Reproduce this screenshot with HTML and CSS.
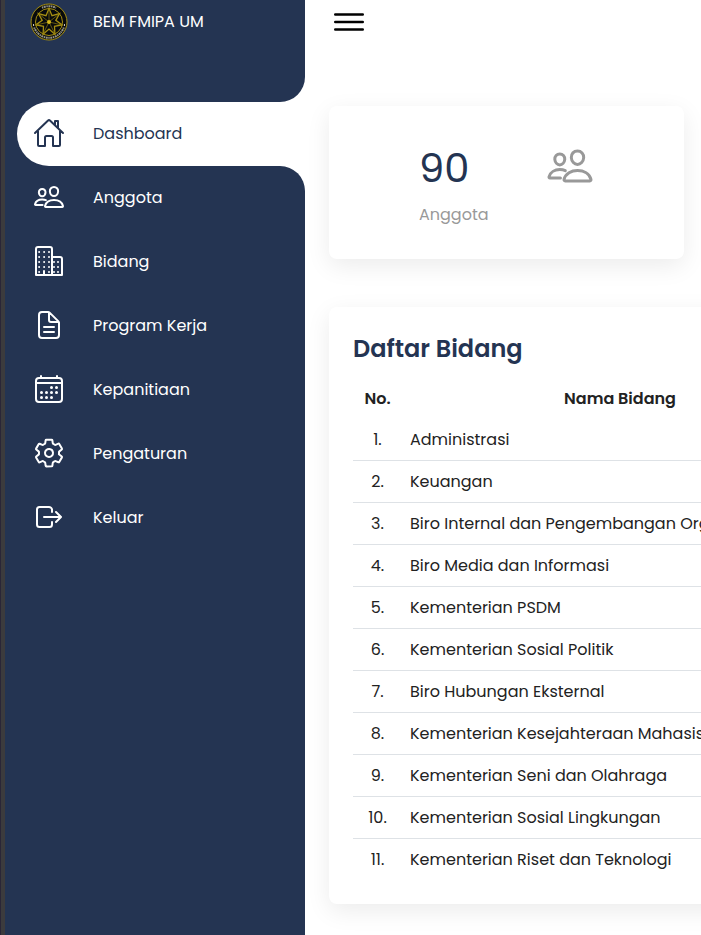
FILE: index.html
```html
<!DOCTYPE html>
<html lang="id">
<head>
<meta charset="utf-8">
<title>BEM FMIPA UM</title>
<link rel="stylesheet" href="styles.css">
</head>
<body>
<div class="edge"></div>
<nav class="sidebar">
  <a class="brand">
    <svg class="logo" viewBox="0 0 38 38">
      <circle cx="19" cy="19" r="18" fill="#080a0c" stroke="#a68f12" stroke-width="1"/>
      <path d="M12 4.8A15.8 15.8 0 0126 4.8M4.2 24.5A15.8 15.8 0 0033.8 24.5" fill="none" stroke="#b9b7a5" stroke-width="2" stroke-dasharray="1.4 .6 2 .6" opacity=".8"/>
      <circle cx="19" cy="19" r="13.5" fill="none" stroke="#a68f12" stroke-width="1"/>
      <path d="M19 5.5L22 12.7 29.6 10.6 25.8 17.4 32.2 22 24.5 23.4 24.9 31.2 19 26 13.1 31.2 13.5 23.4 5.8 22 12.2 17.4 8.4 10.6 16 12.7z" fill="none" stroke="#a68f12" stroke-width="1.3"/>
      <path d="M19 19V6M19 19l10-8M19 19l13 3M19 19l6 12M19 19l-6 12M19 19L6 22M19 19L9 11" fill="none" stroke="#8b790f" stroke-width=".7"/>
      <circle cx="19" cy="19" r="2" fill="#d6b91c"/>
      <path d="M3 22h1M34 22h1" stroke="#fff" stroke-width="1.3"/>
    </svg>
    <span>BEM FMIPA UM</span>
  </a>
  <div class="gap"></div>
  <a class="item active">
    <svg class="icon" viewBox="0 0 512 512"><path d="M80 212v236a16 16 0 0016 16h96V328a24 24 0 0124-24h80a24 24 0 0124 24v136h96a16 16 0 0016-16V212M480 256L266.89 52c-5-5.28-16.69-5.34-21.78 0L32 256M400 179V64h-48v69"/></svg>
    <span>Dashboard</span>
  </a>
  <div class="lower">
  <a class="item">
    <svg class="icon" viewBox="0 0 512 512"><use href="#people"/></svg>
    <span>Anggota</span>
  </a>
  <a class="item">
    <svg class="icon" viewBox="0 0 512 512"><path d="M176 416v64M80 32h192a32 32 0 0132 32v412a4 4 0 01-4 4H48V64a32 32 0 0132-32zM320 192h112a32 32 0 0132 32v256H304V208a16 16 0 0116-16z"/><path class="dots" d="M98 112h0M98 192h0M98 272h0M98 352h0M98 432h0M178 112h0M178 192h0M178 272h0M178 352h0M256 112h0M256 192h0M256 272h0M256 352h0M256 432h0M336 272h0M336 352h0M336 432h0M400 272h0M400 352h0M400 432h0"/></svg>
    <span>Bidang</span>
  </a>
  <a class="item">
    <svg class="icon" viewBox="0 0 512 512"><path d="M416 221.25V416a48 48 0 01-48 48H144a48 48 0 01-48-48V96a48 48 0 0148-48h98.75a32 32 0 0122.62 9.37l141.26 141.26a32 32 0 019.37 22.62zM256 56v120a32 32 0 0032 32h120M176 288h160M176 368h160"/></svg>
    <span>Program Kerja</span>
  </a>
  <a class="item">
    <svg class="icon" viewBox="0 0 512 512"><rect x="48" y="80" width="416" height="384" rx="48"/><path d="M128 48v32M384 48v32M464 160H48"/><path class="dots big" d="M296 232h0M376 232h0M136 312h0M216 312h0M296 312h0M376 312h0M136 392h0M216 392h0M296 392h0"/></svg>
    <span>Kepanitiaan</span>
  </a>
  <a class="item">
    <svg class="icon" viewBox="0 0 512 512"><path d="M262.29 192.31a64 64 0 1057.4 57.4 64.13 64.13 0 00-57.4-57.4zM416.39 256a154.34 154.34 0 01-1.53 20.79l45.21 35.46a10.81 10.81 0 012.45 13.75l-42.77 74a10.81 10.81 0 01-13.14 4.59l-44.9-18.08a16.11 16.11 0 00-15.17 1.75A164.48 164.48 0 01325 400.8a15.94 15.94 0 00-8.82 12.14l-6.73 47.89a11.08 11.08 0 01-10.68 9.17h-85.54a11.11 11.11 0 01-10.69-8.87l-6.72-47.82a16.07 16.07 0 00-9-12.22 155.3 155.3 0 01-21.46-12.57 16 16 0 00-15.11-1.71l-44.89 18.07a10.81 10.81 0 01-13.14-4.58l-42.77-74a10.8 10.8 0 012.45-13.75l38.21-30a16.05 16.05 0 006-14.08c-.36-4.17-.58-8.33-.58-12.5s.21-8.27.58-12.35a16 16 0 00-6.07-13.94l-38.19-30A10.81 10.81 0 0149.48 186l42.77-74a10.81 10.81 0 0113.14-4.59l44.9 18.08a16.11 16.11 0 0015.17-1.75A164.48 164.48 0 01187 111.2a15.94 15.94 0 008.82-12.14l6.73-47.89A11.08 11.08 0 01213.23 42h85.54a11.11 11.11 0 0110.69 8.87l6.72 47.82a16.07 16.07 0 009 12.22 155.3 155.3 0 0121.46 12.57 16 16 0 0015.11 1.71l44.89-18.07a10.81 10.81 0 0113.14 4.58l42.77 74a10.8 10.8 0 01-2.45 13.75l-38.21 30a16.05 16.05 0 00-6.05 14.08c.33 4.14.55 8.3.55 12.47z"/></svg>
    <span>Pengaturan</span>
  </a>
  <a class="item">
    <svg class="icon" viewBox="0 0 512 512"><path d="M304 336v40a40 40 0 01-40 40H104a40 40 0 01-40-40V136a40 40 0 0140-40h152c22.09 0 48 17.91 48 40v40M368 336l80-80-80-80M176 256h256"/></svg>
    <span>Keluar</span>
  </a>
  </div>
</nav>
<main class="main">
  <header class="topbar">
    <svg class="icon menu" viewBox="0 0 512 512"><path d="M80 160h352M80 256h352M80 352h352"/></svg>
  </header>
  <section class="card stat">
    <div>
      <div class="number">90</div>
      <div class="label">Anggota</div>
    </div>
    <svg class="icon people" viewBox="0 0 512 512"><g id="people"><path d="M402 168c-2.93 40.67-33.1 72-66 72s-63.12-31.32-66-72c-3-42.31 26.37-72 66-72s69 30.46 66 72zM336 304c-65.17 0-127.84 32.37-143.54 95.41-2.08 8.34 3.15 16.59 11.72 16.59h263.65c8.57 0 13.77-8.25 11.72-16.59C463.85 335.36 401.18 304 336 304zM200 185.94c-2.34 32.48-26.72 58.06-53 58.06s-50.7-25.57-53-58.06C91.61 152.15 115.34 128 147 128s55.39 24.77 53 57.94zM206 306c-18.05-8.27-37.93-11.45-59-11.45-52 0-102.1 25.85-114.65 76.2-1.65 6.66 2.53 13.25 9.37 13.25H154"/></g></svg>
  </section>
  <section class="card list">
    <h2>Daftar Bidang</h2>
    <table>
      <thead><tr><th class="no">No.</th><th>Nama Bidang</th></tr></thead>
      <tbody>
        <tr><td class="no">1.</td><td>Administrasi</td></tr>
        <tr><td class="no">2.</td><td>Keuangan</td></tr>
        <tr><td class="no">3.</td><td>Biro Internal dan Pengembangan Organisasi</td></tr>
        <tr><td class="no">4.</td><td>Biro Media dan Informasi</td></tr>
        <tr><td class="no">5.</td><td>Kementerian PSDM</td></tr>
        <tr><td class="no">6.</td><td>Kementerian Sosial Politik</td></tr>
        <tr><td class="no">7.</td><td>Biro Hubungan Eksternal</td></tr>
        <tr><td class="no">8.</td><td>Kementerian Kesejahteraan Mahasiswa</td></tr>
        <tr><td class="no">9.</td><td>Kementerian Seni dan Olahraga</td></tr>
        <tr><td class="no">10.</td><td>Kementerian Sosial Lingkungan</td></tr>
        <tr><td class="no">11.</td><td>Kementerian Riset dan Teknologi</td></tr>
      </tbody>
    </table>
  </section>
</main>
</body>
</html>
```
FILE: styles.css
```css
* { box-sizing: border-box; margin: 0; padding: 0; }
body {
  display: flex;
  width: 701px;
  height: 935px;
  overflow: hidden;
  background: #fff;
  color: #222;
  font: 16px/24px Poppins, Inter, sans-serif;
}
.edge { flex: 0 0 5px; background: #3c3b3d; border-left: 1px solid #2a2637; }
.sidebar { flex: 0 0 300px; display: flex; flex-direction: column; background: #fff; color: #fff; }
.brand { display: flex; align-items: center; height: 54px; padding: 0 0 11px 25px; background: #243452; }
.logo { width: 38px; height: 38px; margin-right: 25px; }
.gap { height: 48px; background: #243452; border-bottom-right-radius: 25px; }
.lower { flex: 1; background: #243452; border-top-right-radius: 25px; }
.item { display: flex; align-items: center; gap: 28px; height: 64px; padding-left: 28px; }
.item .icon { margin-bottom: 2px; }
.active { position: relative; background: linear-gradient(90deg, #243452 50%, #fff 50%); color: #243452; }
.active::before { content: ""; position: absolute; inset: 0 0 0 12px; background: #fff; border-radius: 32px 0 0 32px; }
.active > * { position: relative; }
.icon { width: 32px; height: 32px; flex: none; fill: none; stroke: currentColor; stroke-width: 32; stroke-linecap: round; stroke-linejoin: round; }
.dots.big { stroke-width: 48; }
.main { flex: 0 0 396px; min-width: 0; padding-left: 24px; }
.topbar { height: 106px; padding-top: 2px; color: #000; }
.menu { display: block; width: 40px; height: 40px; }
.card { background: #fff; border-radius: 8px; box-shadow: 0 7px 25px rgba(0, 0, 0, .08); }
.stat { display: flex; width: 355px; height: 153px; padding: 34px 0 0 90px; color: #999; gap: 57px; }
.number { font-size: 40px; line-height: 56px; color: #243452; }
.label { margin-top: 7px; }
.people { width: 48px; height: 48px; margin-top: 2px; }
.list { width: 540px; height: 597px; margin-top: 48px; padding: 24px; }
h2 { font-size: 24px; line-height: 36px; font-weight: 600; color: #243452; margin-bottom: 10px; }
table { width: 485px; border-spacing: 0; table-layout: fixed; }
th, td { height: 42px; padding: 0 8px; white-space: nowrap; text-align: left; border-bottom: 1px solid #dee2e6; }
th { font-weight: 600; text-align: center; padding-top: 1px; border: 0; }
.no { width: 49px; text-align: center; }
tbody tr:last-child td { border-color: transparent; }
```
